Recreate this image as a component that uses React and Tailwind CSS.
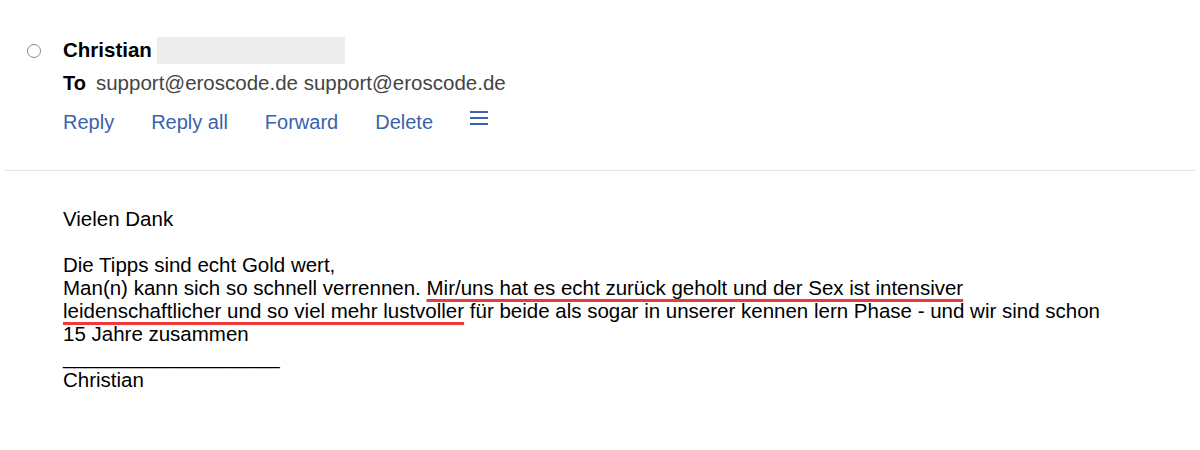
import React from 'react';

const actions = ['Reply', 'Reply all', 'Forward', 'Delete'];

export default function App() {
  return (
    <div className="w-[1200px] h-[450px] bg-white text-black font-['Liberation_Sans',Arial,sans-serif]">
      {/* header */}
      <div className="pt-[37px] pb-[36px] pl-[27px]">
        <div className="flex items-center h-[27px]">
          <span className="w-[14px] h-[14px] rounded-full border-[1.5px] border-[#8a8a8a] mr-[22px]" />
          <span className="text-[20.5px] font-bold">Christian</span>
          <span className="ml-[5px] w-[188px] h-[27px] bg-[#ededed]" />
        </div>
        <div className="flex items-center pl-[36px] mt-[7px] text-[20.5px] leading-[24px]">
          <span className="font-bold mr-[10px] text-[20px]">To</span>
          <span className="text-[#444]">support@eroscode.de support@eroscode.de</span>
        </div>
        <div className="flex items-center pl-[36px] mt-[15px] text-[20px] leading-[24px] text-[#3b62ae]">
          {actions.map((a) => (
            <span key={a} className="mr-[37px]">{a}</span>
          ))}
          <span className="flex flex-col gap-[3.5px] mt-[-8px]">
            <span className="w-[18px] h-[2.5px] bg-[#3b62ae]" />
            <span className="w-[18px] h-[2.5px] bg-[#3b62ae]" />
            <span className="w-[18px] h-[2.5px] bg-[#3b62ae]" />
          </span>
        </div>
      </div>

      <div className="mx-[5px] h-px bg-[#e2e2e2]" />

      {/* body */}
      <div className="pt-[36px] ml-[63px] w-[1062px] text-[20.5px] leading-[23px]">
        <p>Vielen Dank</p>
        <p className="mt-[23px]">Die Tipps sind echt Gold wert,</p>
        <p>
          Man(n) kann sich so schnell verrennen.{' '}
          <span className="underline decoration-[#f03a3a] decoration-[2.5px] underline-offset-[4px]">
            Mir/uns hat es echt zurück geholt und der Sex ist intensiver leidenschaftlicher und so viel mehr lustvoller
          </span>{' '}
          für beide als sogar in unserer kennen lern Phase - und wir sind schon 15 Jahre zusammen
        </p>
        <p>___________________</p>
        <p>Christian</p>
      </div>
    </div>
  );
}
